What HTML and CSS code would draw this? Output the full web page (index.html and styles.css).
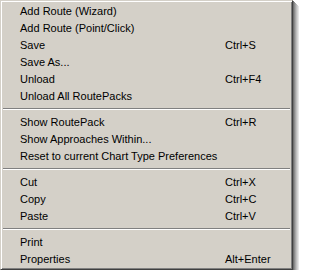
FILE: index.html
```html
<!DOCTYPE html>
<html>
<head>
<meta charset="utf-8">
<link rel="stylesheet" href="styles.css">
</head>
<body>
<div class="menu">
  <div class="item"><span class="label">Add Route (Wizard)</span></div>
  <div class="item"><span class="label">Add Route (Point/Click)</span></div>
  <div class="item"><span class="label">Save</span><span class="key">Ctrl+S</span></div>
  <div class="item"><span class="label">Save As...</span></div>
  <div class="item"><span class="label">Unload</span><span class="key">Ctrl+F4</span></div>
  <div class="item"><span class="label">Unload All RoutePacks</span></div>
  <div class="sep"></div>
  <div class="item"><span class="label">Show RoutePack</span><span class="key">Ctrl+R</span></div>
  <div class="item"><span class="label">Show Approaches Within...</span></div>
  <div class="item"><span class="label">Reset to current Chart Type Preferences</span></div>
  <div class="sep"></div>
  <div class="item"><span class="label">Cut</span><span class="key">Ctrl+X</span></div>
  <div class="item"><span class="label">Copy</span><span class="key">Ctrl+C</span></div>
  <div class="item"><span class="label">Paste</span><span class="key">Ctrl+V</span></div>
  <div class="sep"></div>
  <div class="item"><span class="label">Print</span></div>
  <div class="item"><span class="label">Properties</span><span class="key">Alt+Enter</span></div>
</div>
</body>
</html>
```
FILE: styles.css
```css
html, body {
  margin: 0;
  padding: 0;
  background: #ffffff;
}
.menu {
  box-sizing: border-box;
  width: 293px;
  height: 270px;
  background: #d4d0c8;
  border: 1px solid;
  border-color: #d4d0c8 #404040 #404040 #d4d0c8;
  box-shadow:
    inset 1px 1px 0 #ffffff,
    inset -1px -1px 0 #808080,
    1px 1px 0 #707070,
    2px 2px 0 #8c8c8c,
    3px 3px 0 #a6a6a6,
    4px 4px 0 #bebebe,
    5px 5px 0 #d2d2d2,
    6px 6px 0 #e6e6e6;
  padding: 2px 1px 0 1px;
  display: flex;
  flex-direction: column;
  font-family: "Liberation Sans", Arial, sans-serif;
  font-size: 11px;
  color: #000000;
}
.item {
  height: 17px;
  line-height: 17px;
  display: flex;
  padding-left: 18px;
  white-space: nowrap;
}
.label {
  width: 205px;
  flex: none;
}
.key {
  flex: none;
}
.sep {
  height: 9px;
  flex: none;
  display: flex;
  flex-direction: column;
  justify-content: flex-start;
  padding-top: 3px;
  box-sizing: border-box;
  margin: 0 1px;
}
.sep::before {
  content: "";
  display: block;
  height: 1px;
  background: #808080;
}
.sep::after {
  content: "";
  display: block;
  height: 1px;
  background: #ffffff;
}
```
